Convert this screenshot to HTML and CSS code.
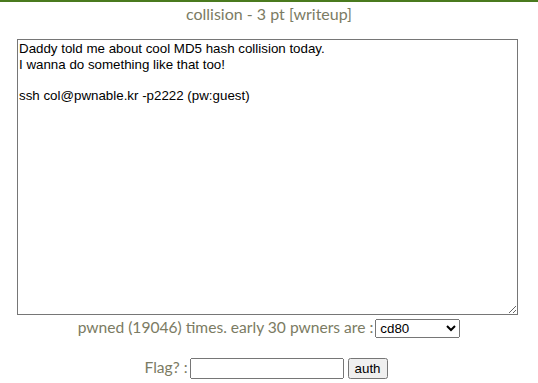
FILE: index.html
```html
<!DOCTYPE html>
<html lang="en">
<head>
<meta charset="UTF-8" />
<title>collision</title>
<link rel="stylesheet" href="styles.css">
</head>
<body>

<div class="title">collision - 3 pt [writeup]</div>

<textarea class="desc" readonly>Daddy told me about cool MD5 hash collision today.
I wanna do something like that too!

ssh col@pwnable.kr -p2222 (pw:guest)
</textarea>

<div class="pwned">
  pwned (19046) times. early 30 pwners are :<select class="pwners">
    <option>cd80</option>
  </select>
</div>

<div class="flag">
  Flag? :<input type="text" class="flagInput" /><button class="auth">auth</button>
</div>

</body>
</html>
```

FILE: styles.css
```css
body {
  margin: 0;
  border-top: 2px solid #4a7a1e;
  font-family: Lato, sans-serif;
  color: #7b7b63;
  text-align: center;
  background: #fff;
}
.title {
  font-size: 16px;
  line-height: 20px;
  margin-top: 2px;
  height: 35px;
}
.desc {
  display: block;
  box-sizing: border-box;
  width: 501px;
  height: 276px;
  margin: 0 0 0 17px;
  padding: 1px 1px;
  font-family: Arial, "Liberation Sans", sans-serif;
  font-size: 13.33px;
  line-height: 15.5px;
  color: #000;
  border: 1px solid #767676;
  resize: both;
}
.pwned {
  font-size: 15.6px;
  margin-top: 3px;
  height: 40px;
}
.pwners {
  width: 85px;
  margin-left: 2px;
  font-family: Arial, "Liberation Sans", sans-serif;
  font-size: 13.33px;
}
.flag {
  font-size: 15.6px;
  padding-right: 6px;
}
.flagInput {
  width: 146px;
  margin-left: 2px;
  font-size: 13px;
}
.auth {
  margin-left: 4px;
  padding: 1px 5px;
  font-family: Arial, "Liberation Sans", sans-serif;
  font-size: 13.33px;
}
```
